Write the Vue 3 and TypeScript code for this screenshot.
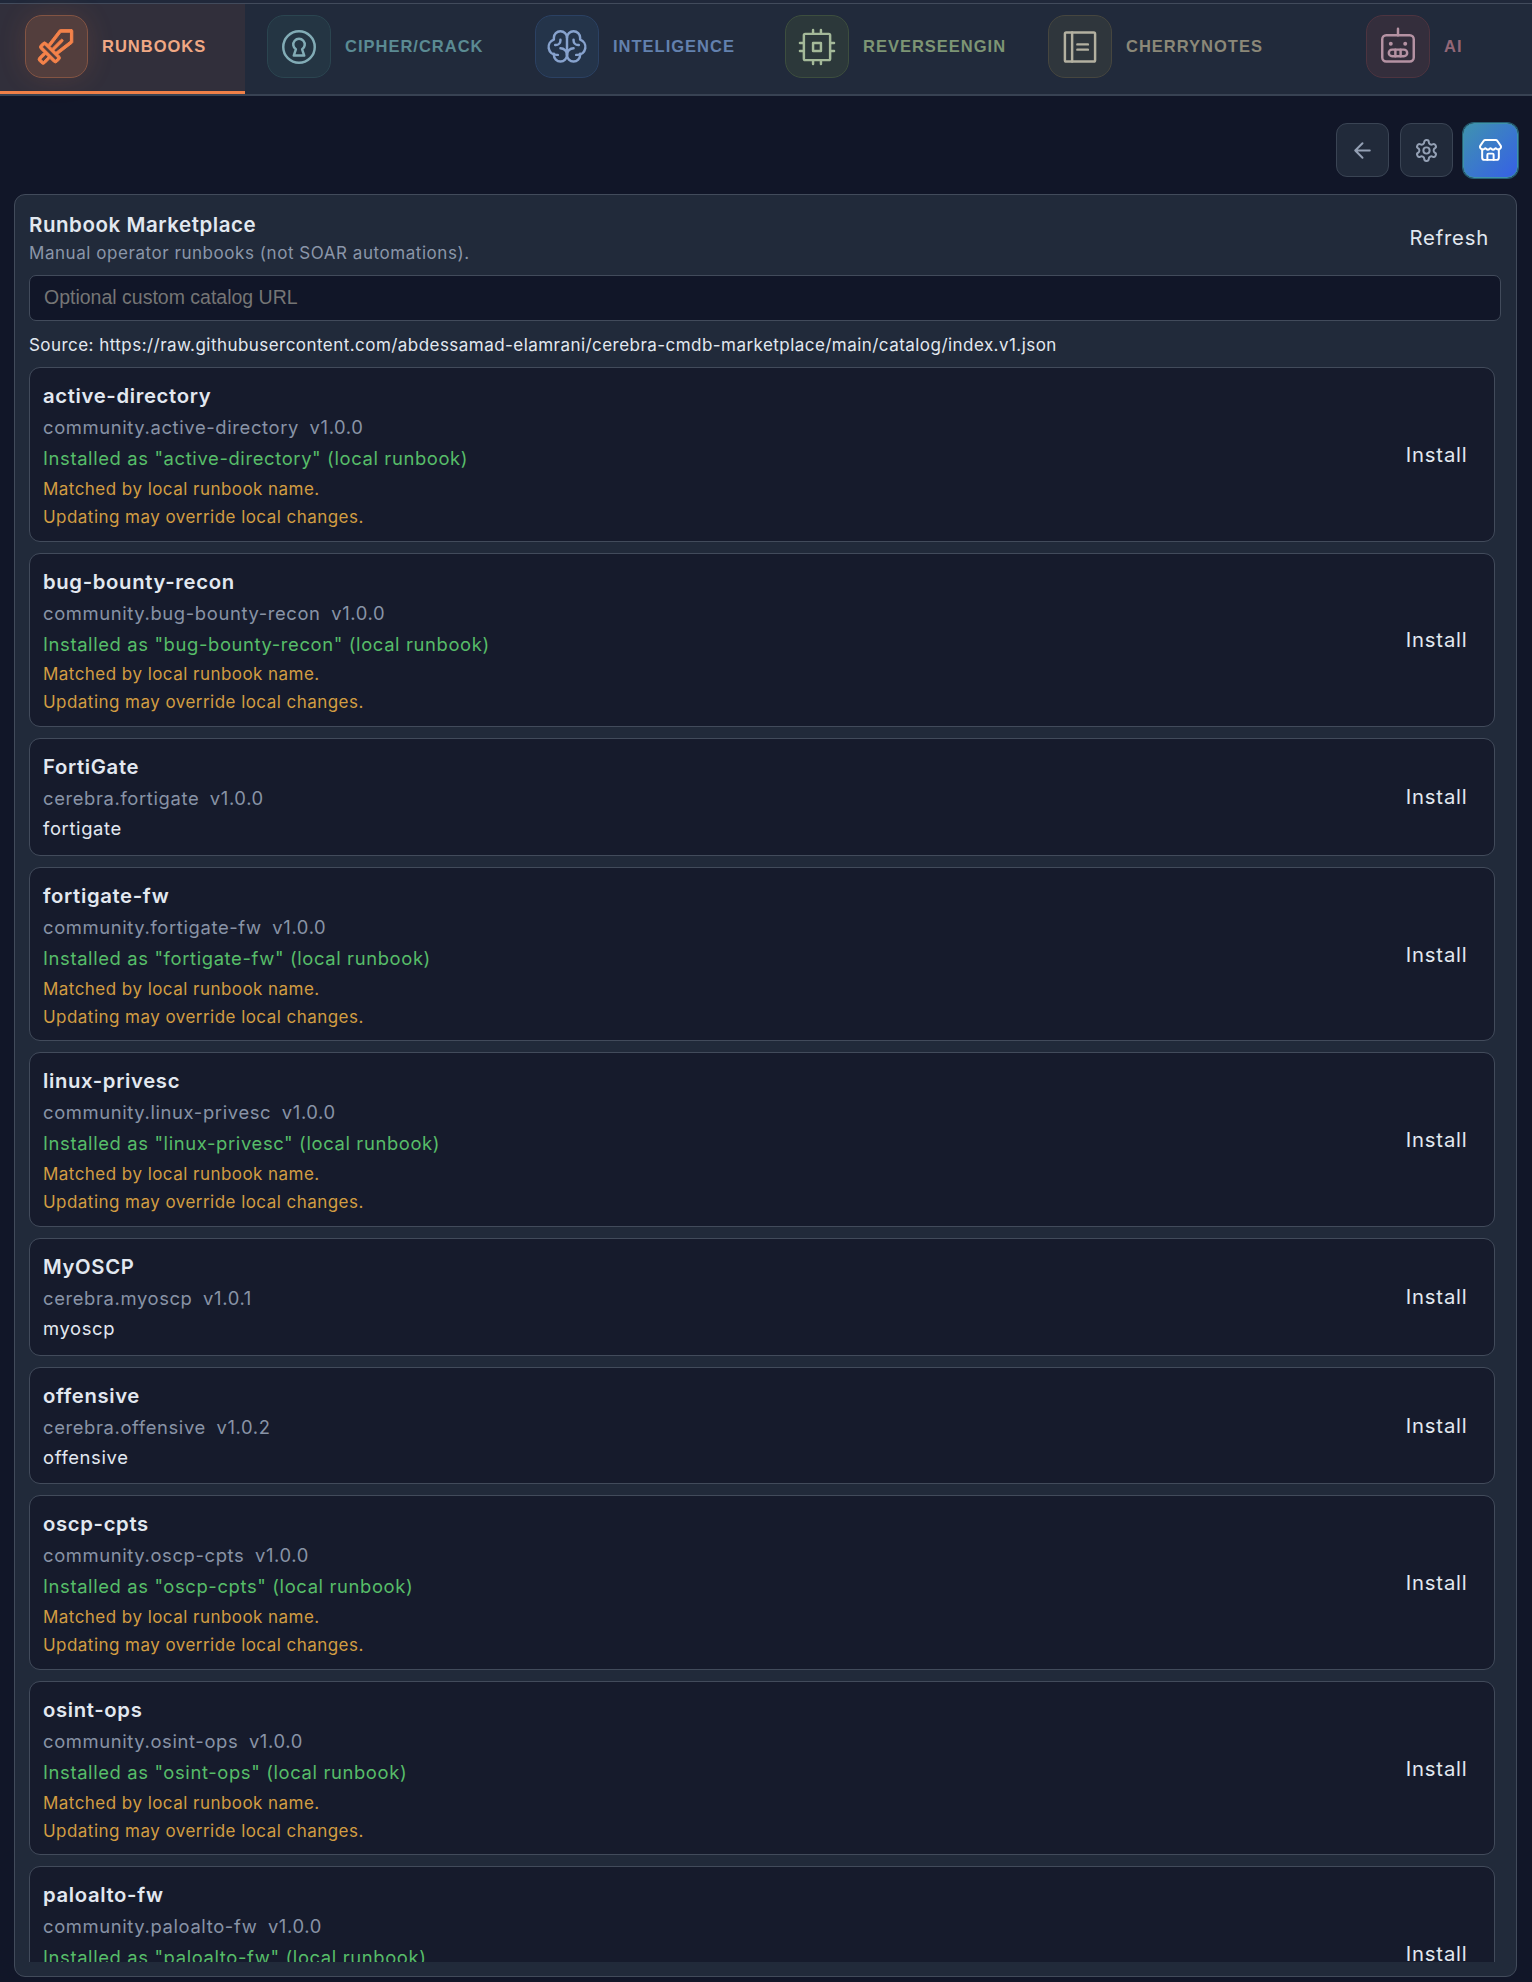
<script setup lang="ts">
interface Tab {
  id: string
  label: string
}

interface Runbook {
  name: string
  pkg: string
  version: string
  installed?: boolean
  description?: string
}

const tabs: Tab[] = [
  { id: 'sword', label: 'RUNBOOKS' },
  { id: 'keyhole', label: 'CIPHER/CRACK' },
  { id: 'brain', label: 'INTELIGENCE' },
  { id: 'cpu', label: 'REVERSEENGIN' },
  { id: 'notebook', label: 'CHERRYNOTES' },
  { id: 'robot', label: 'AI' },
]

const runbooks: Runbook[] = [
  { name: 'active-directory', pkg: 'community.active-directory', version: 'v1.0.0', installed: true },
  { name: 'bug-bounty-recon', pkg: 'community.bug-bounty-recon', version: 'v1.0.0', installed: true },
  { name: 'FortiGate', pkg: 'cerebra.fortigate', version: 'v1.0.0', description: 'fortigate' },
  { name: 'fortigate-fw', pkg: 'community.fortigate-fw', version: 'v1.0.0', installed: true },
  { name: 'linux-privesc', pkg: 'community.linux-privesc', version: 'v1.0.0', installed: true },
  { name: 'MyOSCP', pkg: 'cerebra.myoscp', version: 'v1.0.1', description: 'myoscp' },
  { name: 'offensive', pkg: 'cerebra.offensive', version: 'v1.0.2', description: 'offensive' },
  { name: 'oscp-cpts', pkg: 'community.oscp-cpts', version: 'v1.0.0', installed: true },
  { name: 'osint-ops', pkg: 'community.osint-ops', version: 'v1.0.0', installed: true },
  { name: 'paloalto-fw', pkg: 'community.paloalto-fw', version: 'v1.0.0', installed: true },
]
</script>

<template>
  <div class="app">
    <nav class="tabs">
      <button v-for="(tab, i) in tabs" :key="tab.id" class="tab" :class="[tab.id, { active: i === 0 }]">
        <span class="tile">
          <svg viewBox="0 0 256 256" class="glyph">
            <path
              v-if="tab.id === 'sword'"
              class="solid"
              d="M216,32H152a8,8,0,0,0-6.34,3.12l-64,83.21L72,108.69a16,16,0,0,0-22.64,0l-12.69,12.7a16,16,0,0,0,0,22.63l20,20-28,28a16,16,0,0,0,0,22.63l12.69,12.68a16,16,0,0,0,22.62,0l28-28,20,20a16,16,0,0,0,22.64,0l12.69-12.7a16,16,0,0,0,0-22.63l-9.64-9.64,83.21-64A8,8,0,0,0,224,104V40A8,8,0,0,0,216,32ZM52.69,216,40,203.32l28-28L80.68,188ZM123.31,208,48,132.71,60.7,120,136,195.31ZM208,100.06l-81.74,62.88L115.32,152l50.34-50.34a8,8,0,0,0-11.32-11.31L104,140.68,93.07,129.74,155.94,48H208Z"
            />
            <template v-else-if="tab.id === 'keyhole'">
              <circle cx="128" cy="128" r="96" />
              <path d="M109 142A35 35 0 1 1 147 142L160 180H96Z" />
            </template>
            <template v-else-if="tab.id === 'brain'">
              <path d="M88,136a40,40,0,0,1,40,40a40,40,0,0,1-80,0v-6.7" />
              <path d="M168,136a40,40,0,0,0-40,40a40,40,0,0,0,80,0v-6.7" />
              <path d="M72,176H64A48,48,0,0,1,48,82.7V72a40,40,0,0,1,80,0V176" />
              <path d="M184,176h8a48,48,0,0,0,16-93.3V72a40,40,0,0,0-80,0" />
              <path d="M88,84v4a28,28,0,0,1-28,28h-4M168,84v4a28,28,0,0,0,28,28h4" />
            </template>
            <template v-else-if="tab.id === 'cpu'">
              <rect x="48" y="48" width="160" height="160" rx="8" />
              <rect x="104" y="104" width="48" height="48" />
              <path d="M208 104h24M208 152h24M24 104h24M24 152h24M152 208v24M104 208v24M152 24v24M104 24v24" />
            </template>
            <template v-else-if="tab.id === 'notebook'">
              <rect x="36" y="40" width="184" height="176" rx="8" />
              <path d="M80 40v176M112 112h64M112 144h64" />
            </template>
            <template v-else>
              <rect x="32" y="56" width="192" height="160" rx="24" />
              <rect x="72" y="144" width="112" height="40" rx="20" />
              <path d="M128 56V16M112 144v40M144 144v40" />
              <circle class="dot" cx="84" cy="108" r="12" />
              <circle class="dot" cx="172" cy="108" r="12" />
            </template>
          </svg>
        </span>
        <span class="tab-label">{{ tab.label }}</span>
      </button>
    </nav>

    <div class="toolbar">
      <button class="tool" aria-label="Back">
        <svg viewBox="0 0 24 24"><path d="m12 19-7-7 7-7M19 12H5" /></svg>
      </button>
      <button class="tool" aria-label="Settings">
        <svg viewBox="0 0 24 24">
          <path d="M12.22 2h-.44a2 2 0 0 0-2 2v.18a2 2 0 0 1-1 1.73l-.43.25a2 2 0 0 1-2 0l-.15-.08a2 2 0 0 0-2.73.73l-.22.38a2 2 0 0 0 .73 2.73l.15.1a2 2 0 0 1 1 1.72v.51a2 2 0 0 1-1 1.74l-.15.09a2 2 0 0 0-.73 2.73l.22.38a2 2 0 0 0 2.73.73l.15-.08a2 2 0 0 1 2 0l.43.25a2 2 0 0 1 1 1.73V20a2 2 0 0 0 2 2h.44a2 2 0 0 0 2-2v-.18a2 2 0 0 1 1-1.73l.43-.25a2 2 0 0 1 2 0l.15.08a2 2 0 0 0 2.73-.73l.22-.39a2 2 0 0 0-.73-2.73l-.15-.08a2 2 0 0 1-1-1.74v-.5a2 2 0 0 1 1-1.74l.15-.09a2 2 0 0 0 .73-2.73l-.22-.38a2 2 0 0 0-2.73-.73l-.15.08a2 2 0 0 1-2 0l-.43-.25a2 2 0 0 1-1-1.73V4a2 2 0 0 0-2-2z" />
          <circle cx="12" cy="12" r="3" />
        </svg>
      </button>
      <button class="tool selected" aria-label="Marketplace">
        <svg viewBox="0 0 24 24">
          <path d="M15 21v-5a1 1 0 0 0-1-1h-4a1 1 0 0 0-1 1v5" />
          <path d="M17.774 10.31a1.12 1.12 0 0 0-1.549 0 2.5 2.5 0 0 1-3.451 0 1.12 1.12 0 0 0-1.548 0 2.5 2.5 0 0 1-3.452 0 1.12 1.12 0 0 0-1.549 0 2.5 2.5 0 0 1-3.77-3.248l2.889-4.184A2 2 0 0 1 7 2h10a2 2 0 0 1 1.653.873l2.895 4.192a2.5 2.5 0 0 1-3.774 3.244" />
          <path d="M4 10.95V19a2 2 0 0 0 2 2h12a2 2 0 0 0 2-2v-8.05" />
        </svg>
      </button>
    </div>

    <main class="panel">
      <header class="head">
        <div>
          <h1>Runbook Marketplace</h1>
          <p class="sub">Manual operator runbooks (not SOAR automations).</p>
        </div>
        <button class="text-btn refresh">Refresh</button>
      </header>
      <input class="url" type="text" placeholder="Optional custom catalog URL" />
      <p class="source">
        Source: https://raw.githubusercontent.com/abdessamad-elamrani/cerebra-cmdb-marketplace/main/catalog/index.v1.json
      </p>
      <div class="list">
        <article v-for="book in runbooks" :key="book.name" class="card" :class="{ tall: book.installed }">
          <div>
            <h2>{{ book.name }}</h2>
            <p class="meta"><span>{{ book.pkg }}</span><span>{{ book.version }}</span></p>
            <template v-if="book.installed">
              <p class="state">Installed as "{{ book.name }}" (local runbook)</p>
              <div class="warnings">
                <p>Matched by local runbook name.</p>
                <p>Updating may override local changes.</p>
              </div>
            </template>
            <p v-else class="desc">{{ book.description }}</p>
          </div>
          <button class="text-btn">Install</button>
        </article>
      </div>
    </main>
  </div>
</template>

<style>
body {
  background: #111628;
}
</style>

<style scoped>
* {
  box-sizing: border-box;
}

.app {
  display: flex;
  flex-direction: column;
  width: 1532px;
  height: 1982px;
  overflow: hidden;
  padding-top: 3px;
  background: linear-gradient(#20283a 3px, #111628 3px);
  color: #e2e8f0;
  font-family: Inter, 'Liberation Sans', sans-serif;
  letter-spacing: 0.5px;
}

h1,
h2,
p {
  margin: 0;
}

button {
  border: 0;
  padding: 0;
  background: none;
  color: inherit;
  font: inherit;
  letter-spacing: inherit;
}

.tabs {
  display: grid;
  grid-template-columns: 245px 268px 250px 263px 318px 1fr;
  flex: none;
  height: 93px;
  border-top: 1px solid #424b5c;
  border-bottom: 2px solid #384253;
  background: #212a3b;
}

.tab {
  display: flex;
  align-items: flex-start;
  gap: 14px;
  height: 90px;
  padding: 11px 0 0 22px;
}

.tab.active {
  padding-left: 25px;
  border-bottom: 3px solid #f08048;
  background: #312f3b;
}

.tile {
  display: flex;
  align-items: center;
  justify-content: center;
  flex: none;
  width: 64px;
  height: 63px;
  border: 1px solid var(--line);
  border-radius: 17px;
  background: var(--fill);
}

.active .tile {
  width: 63px;
  box-shadow: 0 0 28px rgba(240, 128, 72, 0.14);
}

.glyph {
  width: 42px;
  height: 42px;
  fill: none;
  stroke: var(--icon);
  stroke-width: 15;
  stroke-linecap: round;
  stroke-linejoin: round;
}

.active .glyph {
  flex: none;
  width: 44.4px;
  height: 44.4px;
}

.solid {
  fill: var(--icon);
  stroke-width: 5;
}

.dot {
  fill: var(--icon);
  stroke: none;
}

.tab-label {
  color: var(--text);
  font: 700 16.5px/63px 'Liberation Sans', Arial, sans-serif;
  letter-spacing: 1px;
}

.sword { --icon: #f4824a; --text: #f0a884; --fill: #533e3d; --line: #835443; }
.keyhole { --icon: #82acb6; --text: #5b8b93; --fill: #243543; --line: #2b4550; }
.brain { --icon: #87a2cd; --text: #6381ae; --fill: #24344a; --line: #2b4163; }
.cpu { --icon: #a4b999; --text: #7d9574; --fill: #2c383a; --line: #3d4e3e; }
.notebook { --icon: #b3b0a0; --text: #8b8878; --fill: #2f363c; --line: #46463f; }
.robot { --icon: #b592a3; --text: #926777; --fill: #342e3c; --line: #4d3440; }

.toolbar {
  display: flex;
  align-items: center;
  justify-content: flex-end;
  gap: 10.5px;
  flex: none;
  height: 56px;
  margin: 26px 14px 16px 0;
}

.tool {
  display: flex;
  align-items: center;
  justify-content: center;
  width: 53px;
  height: 54px;
  border: 1px solid #3a4454;
  border-radius: 11px;
  background: #212a3a;
  color: #94a0b4;
}

.tool.selected {
  width: 55px;
  height: 55px;
  border-color: #3e93a8;
  box-shadow: 0 0 0 1px #276077;
  background: linear-gradient(135deg, #3f92b0, #3660e6);
  color: #fff;
}

.tool svg {
  width: 25px;
  height: 25px;
  fill: none;
  stroke: currentColor;
  stroke-width: 1.9;
  stroke-linecap: round;
  stroke-linejoin: round;
}

.panel {
  display: flex;
  flex-direction: column;
  flex: none;
  width: 1503px;
  height: 1783px;
  margin-left: 14px;
  padding: 13px 14px 14px;
  border: 1px solid #424b5b;
  border-radius: 11px;
  background: #212a3a;
}

.head {
  display: flex;
  justify-content: space-between;
  height: 67px;
}

h1 {
  font-size: 20.5px;
  font-weight: 600;
  line-height: 33px;
  letter-spacing: 0.55px;
}

.sub {
  color: #8b96a9;
  font-size: 17px;
  line-height: 24px;
  letter-spacing: 0.55px;
}

.text-btn {
  font-size: 20.3px;
  font-weight: 400;
  letter-spacing: 0.8px;
}

.refresh {
  height: 58px;
  margin-right: 13px;
}

.url {
  flex: none;
  width: 1472px;
  height: 46px;
  padding: 0 14px 2px;
  border: 1px solid #424b5b;
  border-radius: 7px;
  background: #111628;
  font: 19.5px 'Liberation Sans', Arial, sans-serif;
}

.url::placeholder {
  color: #757575;
  opacity: 1;
}

.source {
  margin-top: 10px;
  font-size: 17px;
  line-height: 28px;
  letter-spacing: 0.455px;
  white-space: nowrap;
}

.list {
  display: flex;
  flex-direction: column;
  gap: 11px;
  flex: 1;
  min-height: 0;
  margin-top: 8px;
  overflow: hidden;
}

.card {
  display: flex;
  justify-content: space-between;
  align-items: center;
  flex: none;
  width: 1466px;
  height: 117.8px;
  padding: 0 26.5px 0 13px;
  border: 1px solid #424b5b;
  border-radius: 11px;
  background: #161b2c;
}

.card > div {
  align-self: flex-start;
  padding-top: 13px;
}

.card.tall {
  height: 174.5px;
}

h2 {
  font-size: 20.3px;
  font-weight: 600;
  line-height: 30px;
  letter-spacing: 0.65px;
}

.meta {
  display: flex;
  gap: 10.6px;
  margin-top: 1px;
  color: #8893a6;
  font-size: 18.4px;
  line-height: 31px;
  letter-spacing: 0.63px;
}

.state,
.desc {
  font-size: 18.4px;
  line-height: 30px;
  letter-spacing: 0.63px;
}

.desc {
  margin-top: -0.6px;
}

.state {
  color: #57bd69;
}

.warnings {
  margin-top: 1.8px;
  color: #d29d42;
  font-size: 17px;
  line-height: 28px;
  letter-spacing: 0.46px;
}
</style>
